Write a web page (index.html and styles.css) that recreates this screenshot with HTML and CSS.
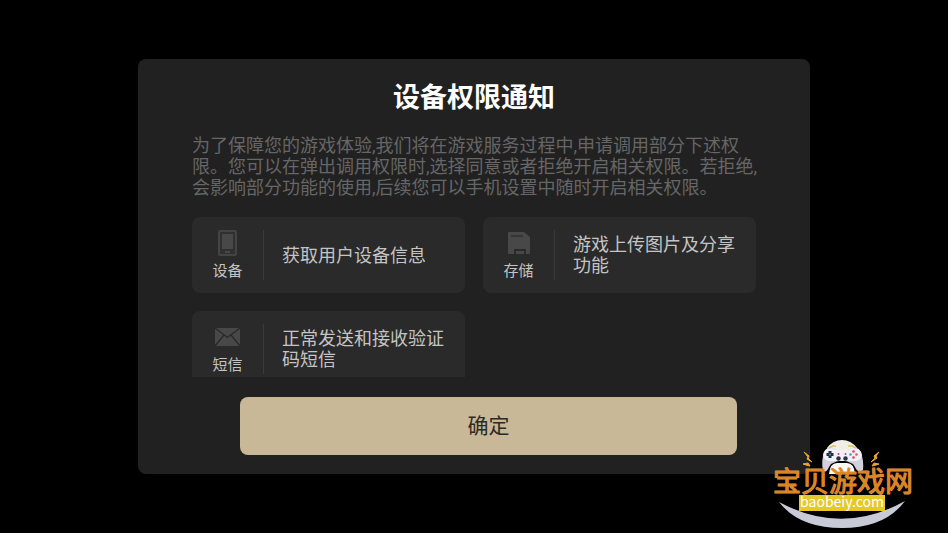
FILE: index.html
```html
<!DOCTYPE html>
<html lang="zh-CN">
<head>
<meta charset="utf-8">
<meta name="viewport" content="width=device-width, initial-scale=1">
<title>设备权限通知</title>
<link rel="stylesheet" href="styles.css">
</head>
<body>
<main class="dialog" role="dialog" aria-labelledby="dialog-title">
  <h1 class="title" id="dialog-title">设备权限通知</h1>
  <p class="intro">为了保障您的游戏体验,我们将在游戏服务过程中,申请调用部分下述权<br>限。您可以在弹出调用权限时,选择同意或者拒绝开启相关权限。若拒绝,<br>会影响部分功能的使用,后续您可以手机设置中随时开启相关权限。</p>
  <ul class="permissions">
    <li class="card">
      <div class="kind">
        <svg class="icon" width="28" height="28" viewBox="0 0 28 28" aria-hidden="true">
          <rect x="5" y="1" width="17" height="24" rx="1" fill="#303030" stroke="#444" stroke-width="2"/>
          <rect x="8" y="4" width="11" height="15" fill="#484848"/>
          <rect x="11" y="21" width="5" height="2" fill="#484848"/>
        </svg>
        <span>设备</span>
      </div>
      <p class="detail">获取用户设备信息</p>
    </li>
    <li class="card">
      <div class="kind">
        <svg class="icon" width="28" height="28" viewBox="0 0 28 28" aria-hidden="true">
          <path d="M4 2h15l6 5v16a1 1 0 0 1-1 1h-3v-5H9v5H4a1 1 0 0 1-1-1V3a1 1 0 0 1 1-1z" fill="#484848"/>
          <path d="M6 6h12" stroke="#303030" stroke-width="1.500"/>
          <path d="M11 21h8v3h-8z" fill="#484848"/>
        </svg>
        <span>存储</span>
      </div>
      <p class="detail">游戏上传图片及分享功能</p>
    </li>
    <li class="card">
      <div class="kind">
        <svg class="icon" width="28" height="28" viewBox="0 0 28 28" aria-hidden="true">
          <rect x="1" y="4" width="25" height="18" rx="1" fill="#484848"/>
          <path d="M1 4l12.500 9.500L26 4M1 22l9-11M26 22l-9-11" fill="none" stroke="#292929" stroke-width="1.300"/>
        </svg>
        <span>短信</span>
      </div>
      <p class="detail">正常发送和接收验证码短信</p>
    </li>
  </ul>
  <button class="confirm" type="button">确定</button>
</main>

<svg class="watermark" width="170" height="103" viewBox="0 0 170 103" role="img" aria-label="宝贝游戏网 baobeiy.com">
  <path d="M19 72Q82 106 145 71Q125 98 82 98Q39 98 19 72z" fill="#c9cad8"/>
  <path d="M67 18Q73 10 82 10Q91 10 97 18L92 30H72z" fill="#f1eee5"/>
  <path d="M63 40Q61 31 64 23Q66 17 72 18L77 20H88L93 18Q99 17 101 23Q104 31 103 40Q98 44 95 37L93 34Q82 27 71 34L69 37Q66 44 63 40z" fill="#d0d1dd"/>
  <path d="M63 25Q64 18 71 18L77 20H88L93 18Q101 18 102 25Q101 31 94 31H71Q64 31 63 25z" fill="#f0f0f6"/>
  <path d="M69 18l4-2h3M88 16h4l4 2" fill="none" stroke="#dfc265" stroke-width="1.500"/>
  <path d="M69 44Q70 33 77 33H87Q94 33 95 44z" fill="#fbfaf6"/>
  <path d="M70 21v7M66.500 24.500h7" stroke="#202d43" stroke-width="3"/>
  <circle cx="70" cy="24.500" r="1" fill="#3ba1ba"/>
  <circle cx="93.500" cy="21.500" r="1.300" fill="#dc4253"/>
  <circle cx="93.500" cy="27.500" r="1.300" fill="#d6454f"/>
  <circle cx="90.500" cy="24.500" r="1.300" fill="#32a8b7"/>
  <circle cx="96.500" cy="24.500" r="1.300" fill="#d95766"/>
  <circle cx="78.500" cy="24" r="1" fill="#c24859"/>
  <circle cx="85.500" cy="24" r="1" fill="#c24859"/>
  <circle cx="78.500" cy="28.500" r="2.200" fill="#283248"/>
  <circle cx="85.500" cy="28.500" r="2.200" fill="#283248"/>
  <g fill="#f0a72c" stroke="#f0a72c" stroke-linejoin="round">
    <path d="M44 22l5 4-1 2 4 4-5-3 1-2z"/>
    <path d="M43 34l5-1 2 3-4-1z"/>
    <path d="M119 22l-5 4 1 2-4 4 6-4-1-2z"/>
    <path d="M119 34l-5-1-2 3 4-1z"/>
  </g>
  <text class="brand" x="13" y="62">宝贝游戏网</text>
  <rect x="39" y="65" width="86" height="16" fill="#e7c829"/>
  <text class="domain" x="82" y="77" text-anchor="middle">baobeiy.com</text>
</svg>
</body>
</html>
```

FILE: styles.css
```css
* {
  box-sizing: border-box;
}

body {
  margin: 0;
  min-height: 100vh;
  padding: 59px 16px;
  background: #000;
  color: #c4c4c4;
  font-family: Roboto, "Noto Sans CJK SC", sans-serif;
  font-size: 18px;
  line-height: 21px;
}

.dialog {
  display: flex;
  flex-direction: column;
  max-width: 672px;
  margin: 0 auto;
  padding: 21px 54px 19px;
  border-radius: 8px;
  background: #212121;
}

.title {
  margin: 0 0 19px;
  color: #fff;
  font-size: 27px;
  line-height: 36px;
  text-align: center;
}

.intro {
  margin: 0 0 19px;
  color: #666;
  white-space: nowrap;
}

.permissions {
  display: grid;
  grid-template-columns: 1fr 1fr;
  grid-auto-rows: max-content;
  gap: 18px;
  max-height: 160px;
  margin: 0 0 20px;
  padding: 0;
  overflow-y: auto;
  scrollbar-width: none;
  list-style: none;
}

.card {
  display: flex;
  padding: 13px 12px 13px 0;
  border-radius: 8px;
  background: #2a2a2a;
}

.kind {
  display: flex;
  flex: 0 0 72px;
  flex-direction: column;
  align-items: center;
  justify-content: space-between;
  height: 50px;
  border-right: 1px solid #3a3a3a;
  font-size: 15px;
  line-height: 18px;
}

.icon {
  display: block;
}

.detail {
  align-self: center;
  margin: 0;
  padding-left: 18px;
}

.confirm {
  height: 58px;
  margin: 0 19px 0 48px;
  border: 0;
  border-radius: 8px;
  background: #c9b897;
  color: #2c2a26;
  font: inherit;
  font-size: 21px;
}

.watermark {
  position: absolute;
  right: 18px;
  bottom: 0;
}

.brand {
  fill: #de8420;
  stroke: #e09a4c;
  stroke-width: 1px;
  stroke-linejoin: round;
  paint-order: stroke;
  font-family: "Noto Sans CJK SC", sans-serif;
  font-size: 28px;
  font-weight: 400;
}

.domain {
  fill: #fff;
  font-family: "Noto Sans CJK SC", sans-serif;
  font-size: 14px;
  font-weight: 400;
}
```
